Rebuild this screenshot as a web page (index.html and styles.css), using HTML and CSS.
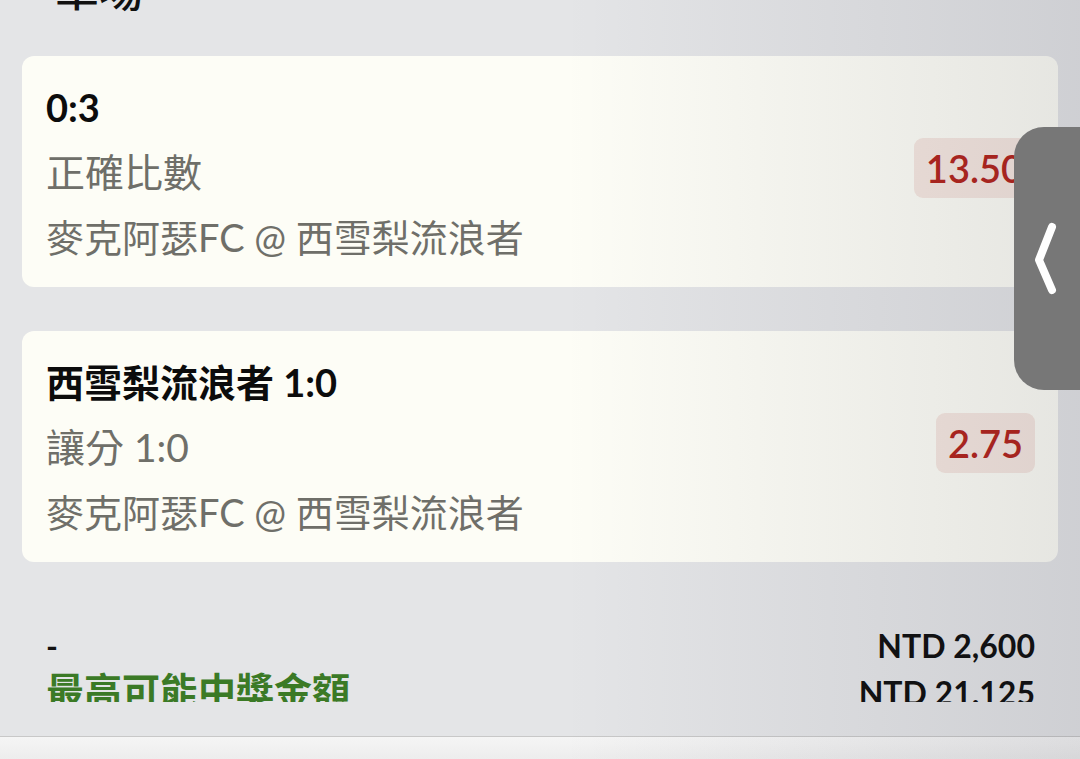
FILE: index.html
```html
<!DOCTYPE html>
<html lang="zh-Hant">
<head>
<meta charset="utf-8">
<title>單場</title>
<link rel="stylesheet" href="styles.css">
</head>
<body>
<div class="screen">
  <div class="scroll">
    <h2 class="section-title">單場</h2>
    <div class="bets">
      <div class="bet-card">
        <div class="bet-info">
          <div class="bet-pick">0:3</div>
          <div class="bet-market">正確比數</div>
          <div class="bet-match">麥克阿瑟FC @ 西雪梨流浪者</div>
        </div>
        <div class="odds">13.50</div>
      </div>
      <div class="bet-card">
        <div class="bet-info">
          <div class="bet-pick">西雪梨流浪者 1:0</div>
          <div class="bet-market">讓分 1:0</div>
          <div class="bet-match">麥克阿瑟FC @ 西雪梨流浪者</div>
        </div>
        <div class="odds">2.75</div>
      </div>
    </div>
    <div class="summary">
      <div class="summary-row">
        <span class="summary-label">-</span>
        <span class="summary-value">NTD 2,600</span>
      </div>
      <div class="summary-row">
        <span class="summary-label win">最高可能中獎金額</span>
        <span class="summary-value">NTD 21.125</span>
      </div>
    </div>
  </div>
  <div class="spacer"></div>
  <div class="bottom-bar"></div>
  <div class="shade"></div>
  <div class="drawer-tab">
    <svg class="chevron" width="66" height="263" viewBox="0 0 66 263">
      <polyline points="38,100 25,133 38,163" fill="none" stroke="#ffffff" stroke-width="8" stroke-linecap="round" stroke-linejoin="round"/>
    </svg>
  </div>
</div>
</body>
</html>
```

FILE: styles.css
```css
html, body {
  margin: 0;
  padding: 0;
}
body {
  background: #e4e5e7;
  font-family: Lato, "Noto Sans CJK TC", sans-serif;
  color: #111;
  overflow: hidden;
}
.screen {
  position: relative;
  width: 1080px;
  height: 759px;
  overflow: hidden;
  display: flex;
  flex-direction: column;
}
.scroll {
  height: 702px;
  overflow: hidden;
  flex: none;
}
.section-title {
  margin: -32px 0 44px 55px;
  font-size: 44px;
  line-height: 44px;
  font-weight: 500;
  color: #111;
}
.bets {
  display: flex;
  flex-direction: column;
  gap: 44px;
  padding: 0 22px;
}
.bet-card {
  background: #fdfdf6;
  border-radius: 12px;
  height: 231px;
  box-sizing: border-box;
  padding: 19px 23px 17px 24px;
  display: flex;
  justify-content: space-between;
  align-items: center;
}
.bet-info {
  display: flex;
  flex-direction: column;
}
.bet-pick {
  font-size: 38px;
  line-height: 65px;
  font-weight: 700;
  color: #0c0c0c;
  height: 65px;
}
.bet-market {
  font-size: 39px;
  line-height: 65px;
  height: 65px;
  color: #6f6f69;
}
.bet-match {
  font-size: 38px;
  line-height: 65px;
  height: 65px;
  color: #6f6f69;
}
.odds {
  height: 60px;
  line-height: 60px;
  padding: 0 12px;
  border-radius: 9px;
  background: rgba(180, 40, 30, 0.1);
  color: #b3261e;
  font-size: 38px;
  font-weight: 600;
  margin-bottom: 9px;
}
.summary {
  padding: 61px 45px 0 46px;
}
.summary-row {
  display: flex;
  justify-content: space-between;
  align-items: baseline;
  height: 45px;
}
.summary-label {
  font-size: 32px;
  line-height: 45px;
  font-weight: 700;
  color: #111;
}
.summary-label.win {
  font-size: 38px;
  color: #3b7a26;
}
.summary-value {
  font-size: 32px;
  line-height: 45px;
  font-weight: 700;
  color: #111;
}
.spacer {
  flex: 1;
}
.bottom-bar {
  height: 22px;
  flex: none;
  border-top: 1px solid #c8c8c8;
  background: linear-gradient(180deg, #f5f5f5, #ededed);
}
.shade {
  position: absolute;
  inset: 0;
  pointer-events: none;
  background: linear-gradient(90deg, rgba(0, 0, 0, 0) 52%, rgba(20, 20, 40, 0.1) 100%);
}
.drawer-tab {
  position: absolute;
  top: 127px;
  left: 1014px;
  width: 66px;
  height: 263px;
  background: #777777;
  border-radius: 30px 0 0 30px;
}
.chevron {
  display: block;
}
```
